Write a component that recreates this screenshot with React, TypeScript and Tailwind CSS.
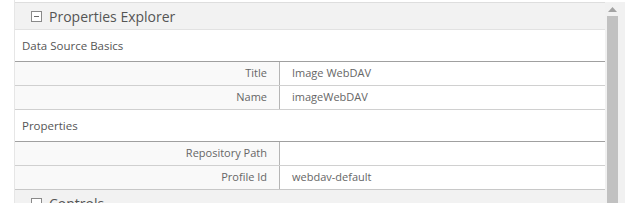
import React from "react";

const font = { fontFamily: '"Open Sans", "Noto Sans", sans-serif' };

function Row({ label, value, last }: { label: string; value: string; last?: boolean }) {
  return (
    <div className={`flex h-[24px] shrink-0 border-b ${last ? "border-[#c8c8c8]" : "border-[#d0d0d0]"}`}>
      <div className="w-[265px] shrink-0 bg-[#f9f9f9] border-r border-[#b5b5b5] flex items-center justify-end pr-[12px] text-[11px] text-[#666]">
        {label}
      </div>
      <div className="flex-1 bg-white flex items-center pl-[12px] text-[11px] text-[#666]">{value}</div>
    </div>
  );
}

function Section({ title }: { title: string }) {
  return (
    <div className="h-[32px] shrink-0 bg-white flex items-center pl-[7px] text-[11.5px] text-[#555] border-b border-[#a0a0a0]">
      {title}
    </div>
  );
}

function MinusBox({ minus = true }: { minus?: boolean }) {
  return (
    <div className="w-[11px] h-[11px] shrink-0 border border-[#8a8a8a] bg-white flex items-center justify-center">
      {minus && <div className="w-[5px] h-[1px] bg-[#6a6a6a]" />}
    </div>
  );
}

export default function App() {
  return (
    <div className="w-[625px] h-[203px] overflow-hidden bg-white flex" style={font}>
      <div className="w-[14px] shrink-0 bg-white" />
      <div className="flex-1 flex pt-[2px] border-l border-[#e6e6e6]">
        <div className="flex-1 flex flex-col border-t border-[#dedede] min-w-0">
          <div className="h-[27px] bg-[#f2f2f2] flex items-center pl-[16px] gap-[7px] border-b border-[#e2e2e2] shrink-0">
            <MinusBox />
            <span className="text-[14px] text-[#555]">Properties Explorer</span>
          </div>
          <Section title="Data Source Basics" />
          <Row label="Title" value="Image WebDAV" />
          <Row label="Name" value="imageWebDAV" />
          <Section title="Properties" />
          <Row label="Repository Path" value="" />
          <Row label="Profile Id" value="webdav-default" last />
          <div className="h-[30px] shrink-0 bg-[#f2f2f2] flex items-start pl-[16px] pt-[8px] gap-[7px]">
            <MinusBox minus={false} />
            <span className="text-[14px] text-[#555] leading-[11px]">Controls</span>
          </div>
        </div>
        <div className="w-[20px] shrink-0 bg-[#f1f1f1] flex flex-col items-start pl-[2px]">
          <div className="w-[11px] h-[14px] shrink-0 flex items-center justify-center">
            <svg width="9" height="5" viewBox="0 0 9 5">
              <polygon points="4.5,0 9,5 0,5" fill="#a3a3a3" />
            </svg>
          </div>
          <div className="w-[11px] flex-1 bg-[#c1c1c1]" />
        </div>
      </div>
    </div>
  );
}
